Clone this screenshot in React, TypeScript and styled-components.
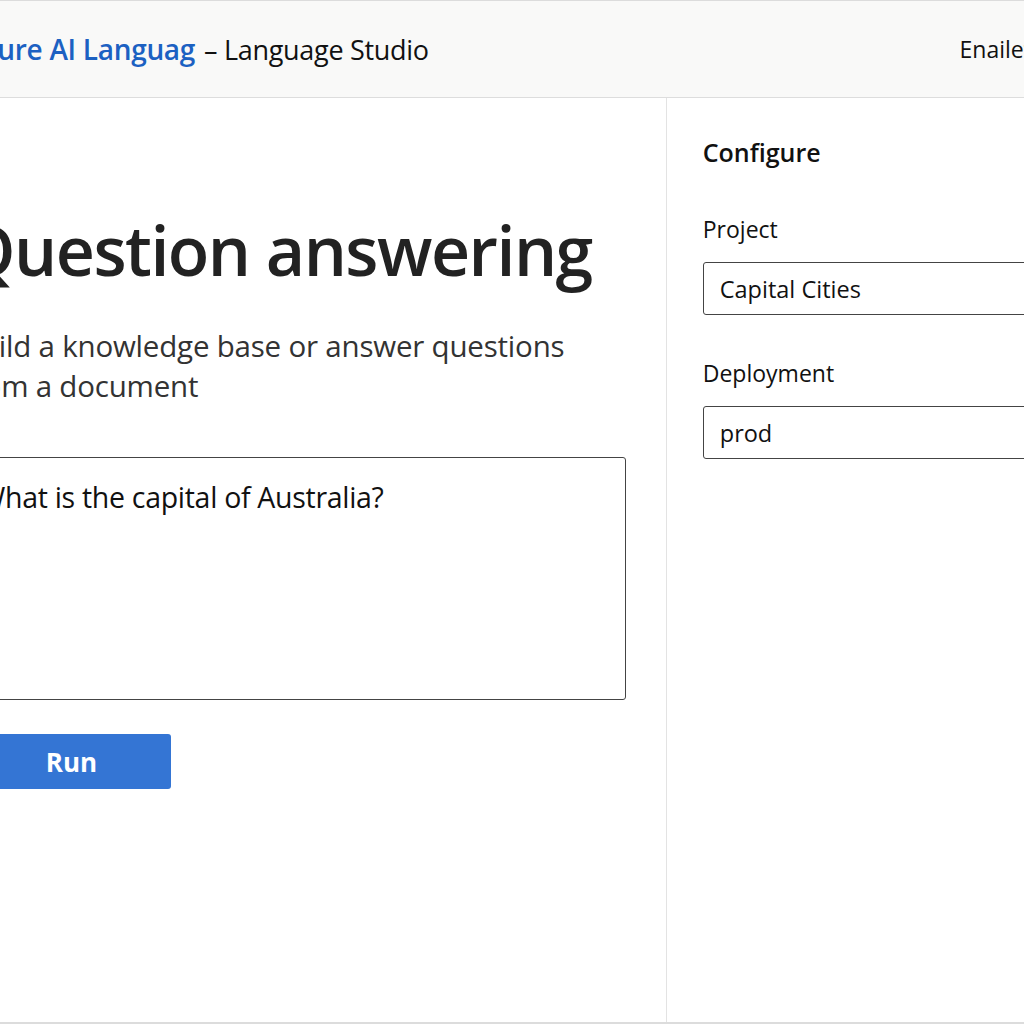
import React from "react";
import styled, { createGlobalStyle } from "styled-components";

const GlobalStyle = createGlobalStyle`
  html, body {
    margin: 0;
    padding: 0;
    background: #fff;
    font-family: "Open Sans", "Noto Sans", sans-serif;
    -webkit-font-smoothing: antialiased;
  }
`;

const Viewport = styled.div`
  width: 1024px;
  height: 1024px;
  overflow: hidden;
  box-sizing: border-box;
  border-top: 1px solid #dcdcdc;
  border-bottom: 2px solid #dcdcdc;
  display: flex;
  flex-direction: column;
`;

const Header = styled.header`
  height: 96px;
  flex: none;
  background: #f9f9f8;
  border-bottom: 1px solid #dddddd;
  display: flex;
  align-items: center;
  justify-content: space-between;
  margin-left: -34px;
  width: 1100px;
  font-size: 27px;
`;

const Brand = styled.div`
  display: flex;
  align-items: baseline;
  gap: 9px;
  color: #111;
  letter-spacing: -0.3px;
`;

const Product = styled.span`
  color: #1c61c2;
  font-size: 28px;
  font-weight: 600;
  letter-spacing: -0.3px;
`;

const User = styled.div`
  font-size: 23px;
  color: #111;
  padding-right: 34px;
`;

const Body = styled.div`
  flex: 1;
  display: flex;
  margin-left: -78px;
  width: 1200px;
`;

const Main = styled.main`
  width: 746px;
  box-sizing: border-box;
  padding: 118px 0 0 40px;
  border-right: 1px solid #e3e3e3;
`;

const Title = styled.h1`
  margin: 0;
  font-size: 68px;
  font-weight: 600;
  line-height: 1;
  color: #222;
  letter-spacing: -1.5px;
`;

const Lead = styled.p`
  margin: 42px 0 0;
  font-size: 29.5px;
  line-height: 40px;
  color: #333;
  width: 640px;
  letter-spacing: -0.2px;
`;

const Question = styled.textarea`
  display: block;
  margin-top: 51px;
  width: 664px;
  height: 243px;
  box-sizing: border-box;
  border: 1px solid #444;
  border-radius: 3px;
  padding: 20px 16px;
  font-family: inherit;
  font-size: 28.5px;
  color: #111;
  resize: none;
  outline: none;
  letter-spacing: -0.3px;
`;

const RunButton = styled.button`
  margin-top: 34px;
  width: 209px;
  height: 55px;
  border: none;
  border-radius: 3px;
  background: #3475d4;
  color: #fff;
  font-family: inherit;
  font-size: 26px;
  font-weight: 700;
  padding: 0 0 0 10px;
`;

const Side = styled.aside`
  padding: 36px 0 0 36px;
  width: 420px;
  display: flex;
  flex-direction: column;
`;

const SideTitle = styled.h2`
  margin: 0 0 44px;
  font-size: 25px;
  font-weight: 600;
  color: #111;
  line-height: 36px;
`;

const Label = styled.label`
  font-size: 23px;
  color: #111;
  line-height: 30px;
  margin-bottom: 18px;
`;

const Field = styled.div`
  height: 53px;
  box-sizing: border-box;
  border: 1px solid #444;
  border-radius: 3px;
  display: flex;
  align-items: center;
  padding-left: 16px;
  font-size: 23.5px;
  color: #111;
  margin-bottom: 43px;
`;

const App = (): JSX.Element => (
  <>
    <GlobalStyle />
    <Viewport>
      <Header>
        <Brand>
          <Product>Azure AI Languag</Product>
          <span>– Language Studio</span>
        </Brand>
        <User>Enailet</User>
      </Header>
      <Body>
        <Main>
          <Title>Question answering</Title>
          <Lead>Build a knowledge base or answer questions from a document</Lead>
          <Question defaultValue="What is the capital of Australia?" />
          <RunButton>Run</RunButton>
        </Main>
        <Side>
          <SideTitle>Configure</SideTitle>
          <Label>Project</Label>
          <Field>Capital Cities</Field>
          <Label>Deployment</Label>
          <Field>prod</Field>
        </Side>
      </Body>
    </Viewport>
  </>
);

export default App;
